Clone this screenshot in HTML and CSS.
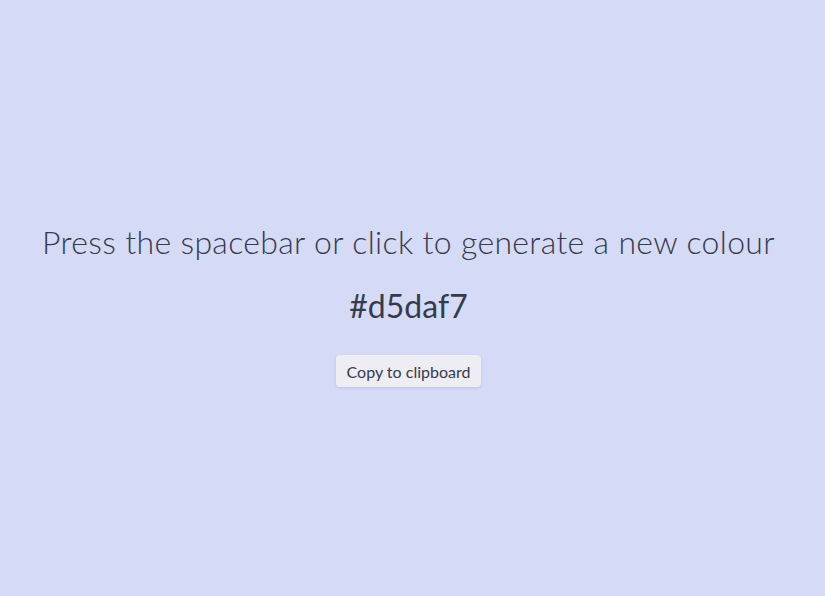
FILE: index.html
```html
<!DOCTYPE html>
<html lang="en">
<head>
<meta charset="utf-8">
<title>Colour generator</title>
<link rel="stylesheet" href="styles.css">
</head>
<body>
<main class="page">
  <h1 class="prompt">Press the spacebar or click to generate a new colour</h1>
  <p class="hex">#d5daf7</p>
  <button class="copy" type="button">Copy to clipboard</button>
</main>
</body>
</html>
```

FILE: styles.css
```css
html, body {
  margin: 0;
  padding: 0;
  height: 100%;
}
body {
  background: #d5daf7;
  color: #363a4f;
  font-family: "Lato", "Open Sans", sans-serif;
}
.page {
  box-sizing: border-box;
  height: 100%;
  padding-top: 13px;
  padding-right: 8px;
  display: flex;
  flex-direction: column;
  align-items: center;
  justify-content: center;
}
.prompt {
  margin: 0;
  font-size: 32px;
  font-weight: 300;
  line-height: 40px;
  letter-spacing: 0.33px;
  text-align: center;
}
.hex {
  margin: 24px 0 0;
  font-size: 32px;
  font-weight: 400;
  line-height: 40px;
}
.copy {
  margin-top: 29px;
  font-family: inherit;
  font-size: 16px;
  color: #363a4f;
  background: #ededf3;
  border: none;
  border-radius: 4px;
  padding: 0 11px;
  height: 32px;
  min-width: 145px;
  white-space: nowrap;
  box-shadow: 0 1px 3px rgba(60, 60, 100, 0.15);
}
```
